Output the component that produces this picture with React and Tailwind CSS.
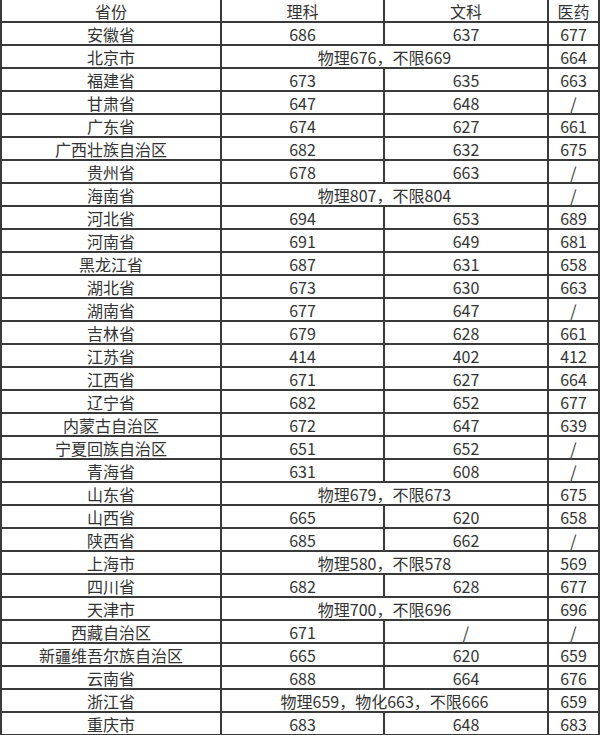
import React from "react";

const rows = [
  ["安徽省", "686", "637", "677"],
  ["北京市", "物理676，不限669", null, "664"],
  ["福建省", "673", "635", "663"],
  ["甘肃省", "647", "648", "/"],
  ["广东省", "674", "627", "661"],
  ["广西壮族自治区", "682", "632", "675"],
  ["贵州省", "678", "663", "/"],
  ["海南省", "物理807，不限804", null, "/"],
  ["河北省", "694", "653", "689"],
  ["河南省", "691", "649", "681"],
  ["黑龙江省", "687", "631", "658"],
  ["湖北省", "673", "630", "663"],
  ["湖南省", "677", "647", "/"],
  ["吉林省", "679", "628", "661"],
  ["江苏省", "414", "402", "412"],
  ["江西省", "671", "627", "664"],
  ["辽宁省", "682", "652", "677"],
  ["内蒙古自治区", "672", "647", "639"],
  ["宁夏回族自治区", "651", "652", "/"],
  ["青海省", "631", "608", "/"],
  ["山东省", "物理679，不限673", null, "675"],
  ["山西省", "665", "620", "658"],
  ["陕西省", "685", "662", "/"],
  ["上海市", "物理580，不限578", null, "569"],
  ["四川省", "682", "628", "677"],
  ["天津市", "物理700，不限696", null, "696"],
  ["西藏自治区", "671", "/", "/"],
  ["新疆维吾尔族自治区", "665", "620", "659"],
  ["云南省", "688", "664", "676"],
  ["浙江省", "物理659，物化663，不限666", null, "659"],
  ["重庆市", "683", "648", "683"],
];

function Cell({ children, span }) {
  return (
    <div
      className={
        "h-[23px] border border-[#3a3a3a] flex items-center justify-center whitespace-nowrap leading-none " +
        (span ? "col-span-2" : "")
      }
    >
      {children}
    </div>
  );
}

export default function App() {
  return (
    <div className="w-[600px] h-[735px] overflow-hidden bg-white">
      <div
        className="w-[600px] -mt-[2px] border border-[#3a3a3a] grid grid-cols-[220px_163px_164px_51px] text-[16px] text-[#333]"
        style={{ fontFamily: '"Noto Sans CJK SC", "Noto Sans", sans-serif' }}
      >
        <Cell>省份</Cell>
        <Cell>理科</Cell>
        <Cell>文科</Cell>
        <Cell>医药</Cell>
        {rows.map((r, i) => (
          <React.Fragment key={i}>
            <Cell>{r[0]}</Cell>
            {r[2] === null ? (
              <Cell span>{r[1]}</Cell>
            ) : (
              <>
                <Cell>{r[1]}</Cell>
                <Cell>{r[2]}</Cell>
              </>
            )}
            <Cell>{r[3]}</Cell>
          </React.Fragment>
        ))}
      </div>
    </div>
  );
}
